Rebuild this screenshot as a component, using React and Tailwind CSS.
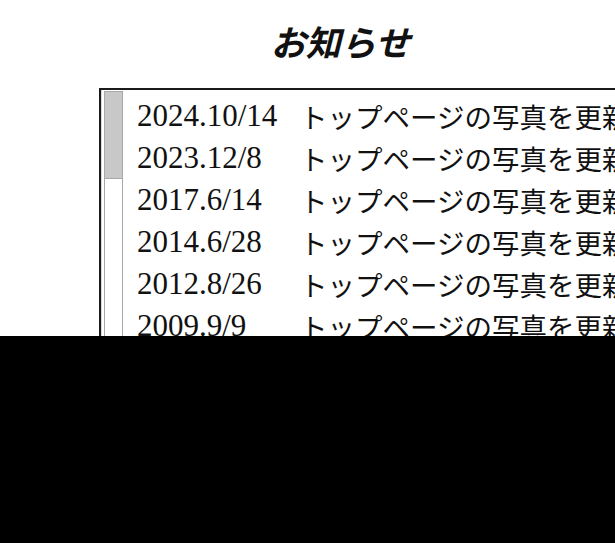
import React from "react";

const rows = [
  "2024.10/14",
  "2023.12/8",
  "2017.6/14",
  "2014.6/28",
  "2012.8/26",
  "2009.9/9",
  "2008.4/1",
];

export default function App() {
  return (
    <div className="w-[615px] h-[543px] overflow-hidden bg-white flex flex-col">
      <div className="h-[88px] shrink-0 flex items-start justify-center pl-[66px] pt-[17px]">
        <h1
          className="text-[35px] leading-[48px] font-bold italic text-[#111]"
          style={{ fontFamily: '"Noto Sans CJK JP", sans-serif' }}
        >
          お知らせ
        </h1>
      </div>
      <div className="h-[248px] shrink-0 ml-[99px] w-[720px] border-t-2 border-l-2 border-[#1a1a1a] flex overflow-hidden">
        <div className="w-[3px] shrink-0 border-l border-[#dcdcdc]" />
        <div className="w-[19px] shrink-0 pt-[1px] flex flex-col">
          <div className="h-[88px] bg-[#c8c8c8] border border-[#a8a8a8]" />
          <div className="flex-1 border-x border-[#a8a8a8]" />
        </div>
        <div className="flex-1 pl-[14px] pt-[5px] flex flex-col text-[#111]">
          {rows.map((d) => (
            <div key={d} className="h-[42px] shrink-0 flex items-center whitespace-nowrap">
              <span
                className="w-[163px] shrink-0 text-[31px] leading-[42px]"
                style={{ fontFamily: '"Liberation Serif", serif' }}
              >
                {d}
              </span>
              <span
                className="text-[27.5px] leading-[42px]"
                style={{ fontFamily: '"Noto Sans CJK JP", sans-serif' }}
              >
                トップページの写真を更新しました。
              </span>
            </div>
          ))}
        </div>
      </div>
      <div className="flex-1 bg-black" />
    </div>
  );
}
